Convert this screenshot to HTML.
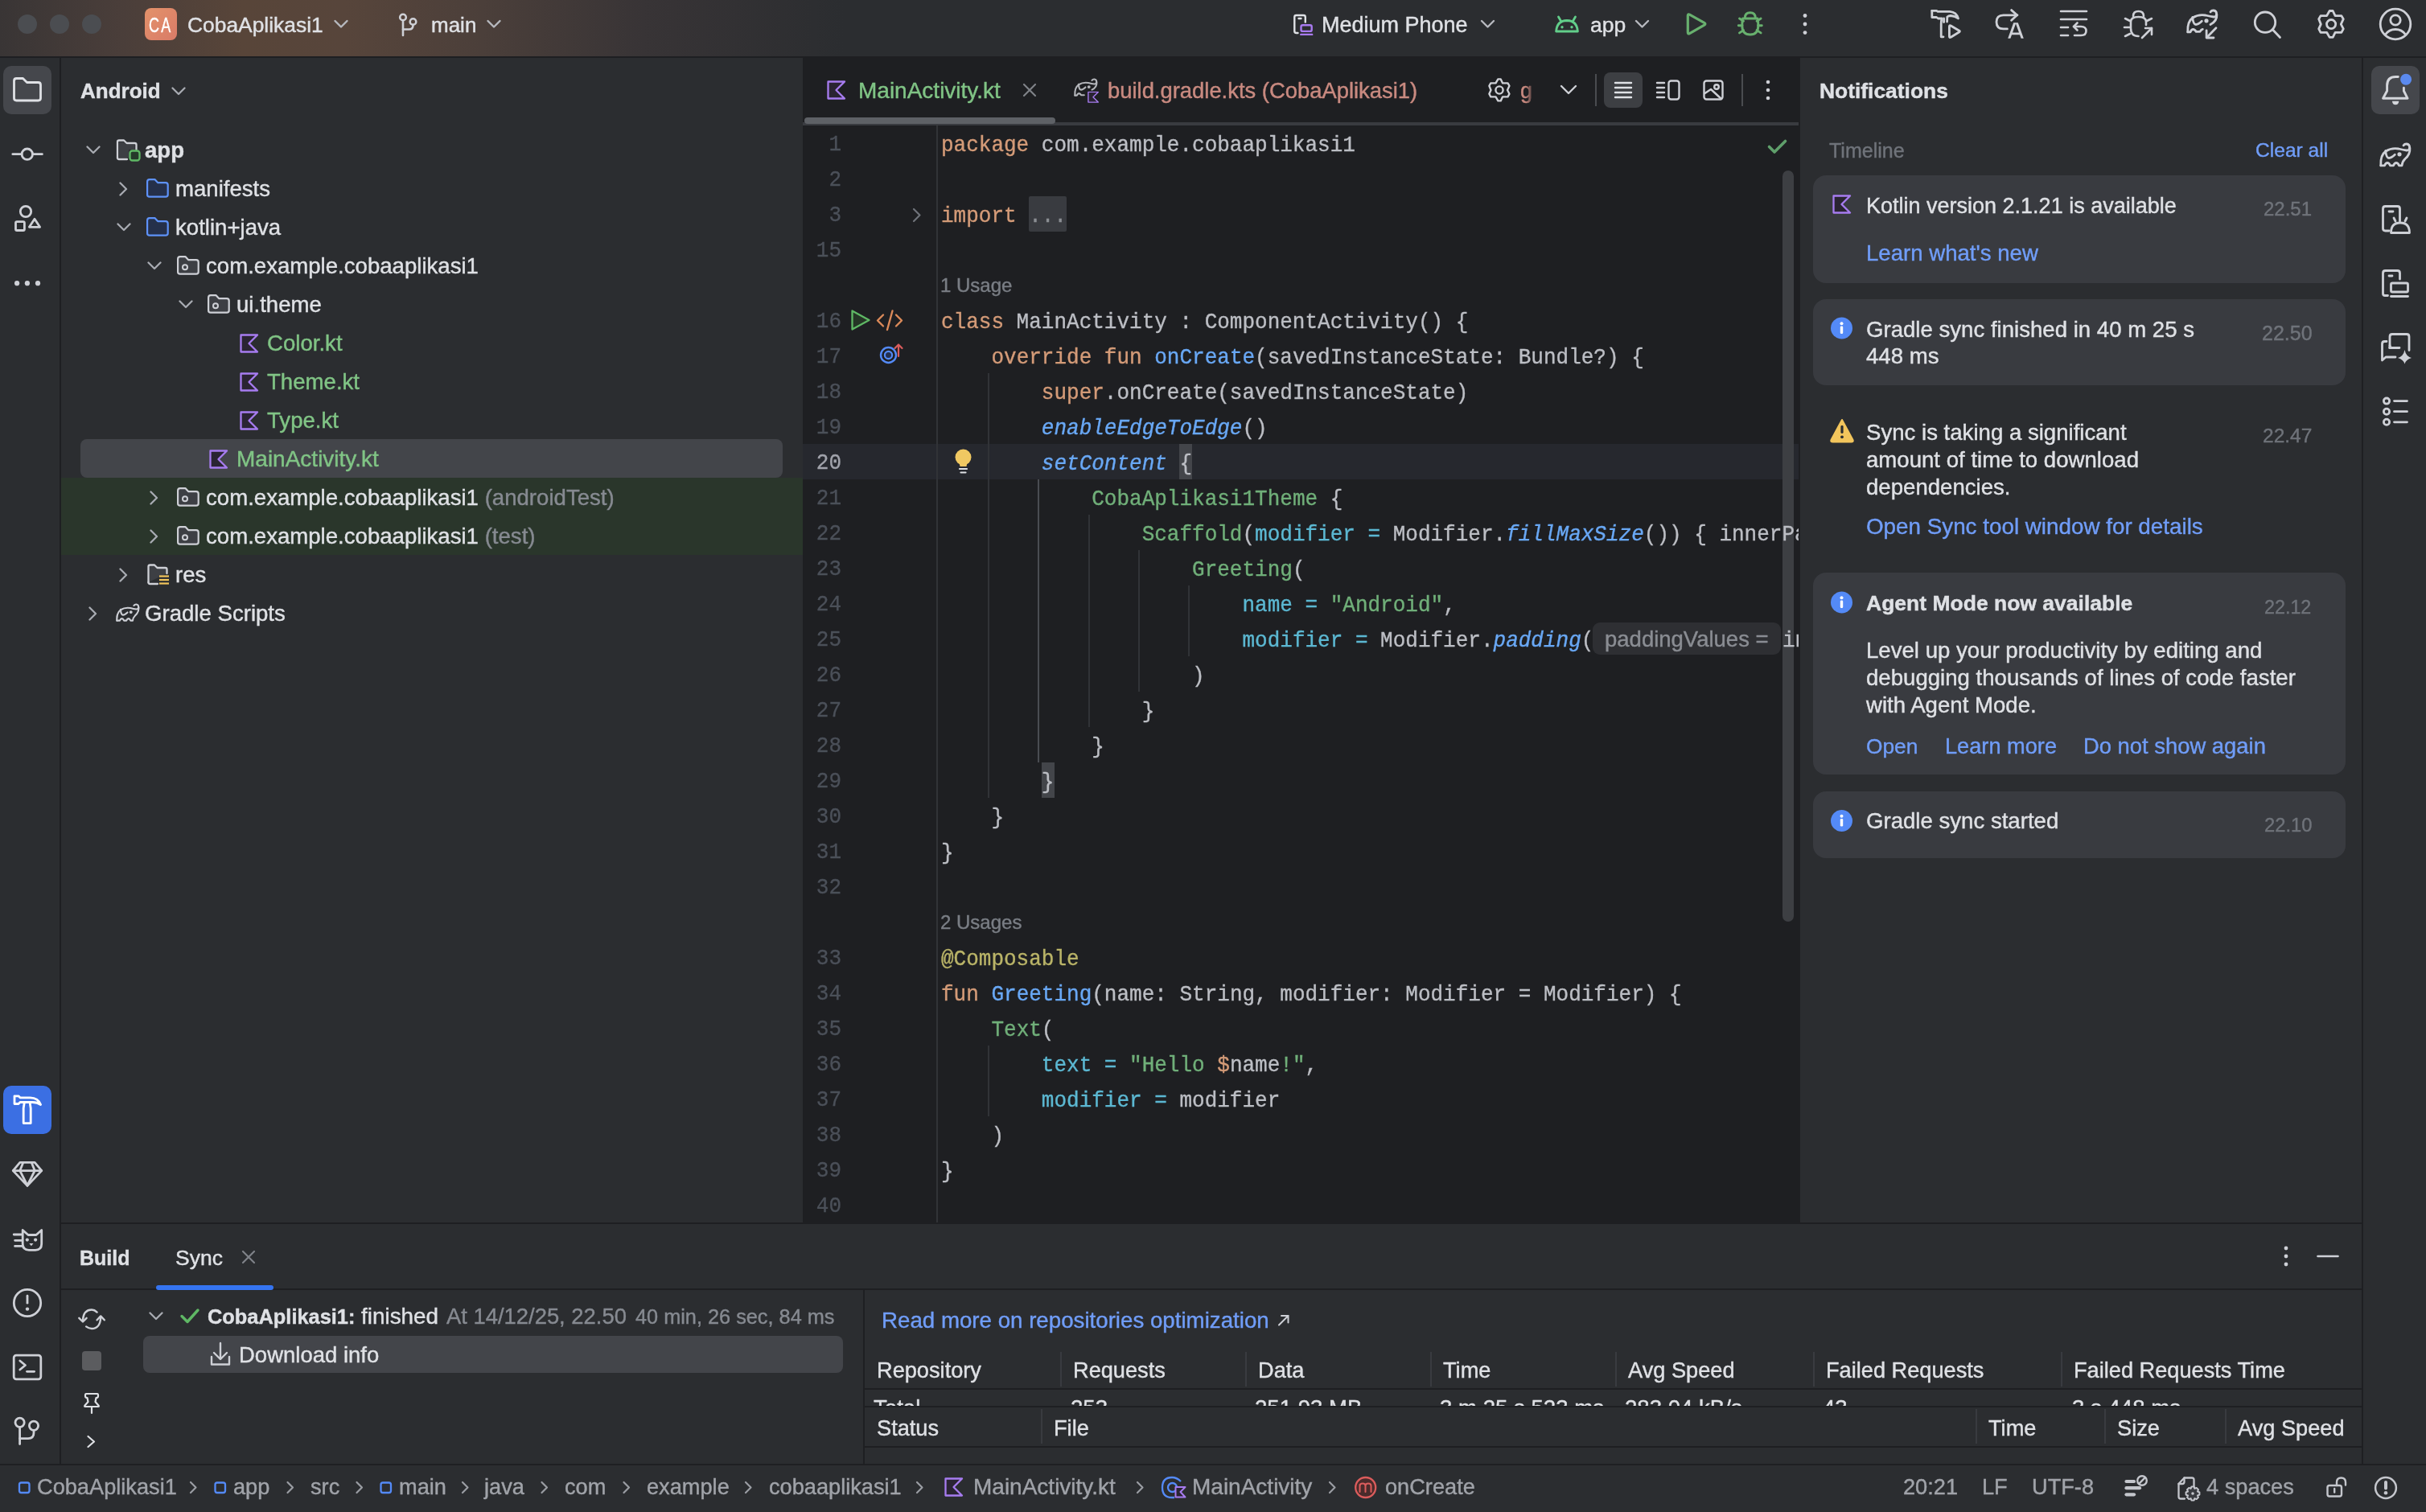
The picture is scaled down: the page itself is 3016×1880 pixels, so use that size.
<!DOCTYPE html>
<html><head><meta charset="utf-8">
<style>
*{margin:0;padding:0;box-sizing:border-box}
html,body{will-change:transform;width:3016px;height:1880px;overflow:hidden;background:#2B2D30;font-family:"Liberation Sans",sans-serif;color:#DFE1E5;font-size:27.6px}
.a{position:absolute}
.t{-webkit-text-stroke:0.4px currentColor;position:absolute;margin-top:1px;white-space:pre;line-height:44px;height:44px}
svg.i{position:absolute;overflow:visible}
.s{fill:none;stroke-linecap:round;stroke-linejoin:round}
.cd{transform:scaleY(1.07);transform-origin:0 29px;-webkit-text-stroke:0.35px currentColor;position:absolute;left:1170px;margin-top:1px;white-space:pre;font-family:"Liberation Mono",monospace;font-size:26px;line-height:44px;height:44px;color:#BCBEC4}
.ln{transform:scaleY(1.07);transform-origin:0 29px;-webkit-text-stroke:0.3px currentColor;position:absolute;left:996px;width:50px;text-align:right;white-space:pre;font-family:"Liberation Mono",monospace;font-size:26px;line-height:44px;height:44px;color:#4B5059}
.k{color:#D49B78}.fd{color:#69A8F5}.fi{color:#69A8F5;font-style:italic}.cp{color:#70AF79}.na{color:#5CB8D2}.st{color:#70AF79}.an{color:#BAB468}
.gl{position:absolute;width:2px;background:#313337}
.lnk{color:#709DF8}
.gr{color:#6F737A}
.card{position:absolute;left:2254px;width:662px;background:#393B40;border-radius:16px}
</style></head><body>

<!-- ============ TITLE BAR ============ -->
<div class="a" style="left:0;top:0;width:3016px;height:70px;background:#2B2D30"></div>
<div class="a" style="left:0;top:0;width:1100px;height:70px;background:linear-gradient(90deg,#393535 0px,#4A3E3A 150px,#584539 300px,#57453B 430px,#4B3F3A 600px,#383436 800px,#2B2D30 1050px)"></div>
<svg class="i" style="left:0;top:0" width="3016" height="70">
 <g fill="#4B4D51"><circle cx="34" cy="30" r="12"/><circle cx="74" cy="30" r="12"/><circle cx="114" cy="30" r="12"/></g>
 <defs><linearGradient id="pg" x1="0" y1="0" x2="1" y2="1"><stop offset="0" stop-color="#E3926A"/><stop offset="1" stop-color="#D97B68"/></linearGradient></defs>
 <rect x="180" y="10" width="40" height="40" rx="8" fill="url(#pg)"/>
 <g class="s" stroke="#B7B9BF" stroke-width="2.4"><path d="M416.5 26 L424 33.5 L431.5 26"/><path d="M606.5 26 L614 33.5 L621.5 26"/><path d="M1842 26 L1849.5 33.5 L1857 26"/><path d="M2034 26 L2041.5 33.5 L2049 26"/></g>
 <g class="s" stroke="#CED0D6" stroke-width="2.6"><circle cx="501" cy="21.5" r="3.8"/><circle cx="513.5" cy="27" r="3.8"/><path d="M501 25.3 V44"/><path d="M513.5 30.8 V31.5 Q513.5 36.5 508.5 36.5 H501"/></g>
 <!-- device icon -->
 <g class="s" stroke="#DFE1E5" stroke-width="2.4"><path d="M1613.5 41 H1611.5 Q1609.3 41 1609.3 38.8 V21.2 Q1609.3 19 1611.5 19 H1620.5 Q1622.8 19 1622.8 21.2 V27.5"/><path d="M1614.5 23 H1617.5"/></g>
 <g class="s" stroke="#A97BF0" stroke-width="2.4"><rect x="1617.5" y="31.3" width="13.2" height="7.6" rx="2"/><path d="M1617.3 42.9 H1631.2"/></g>
 <!-- android -->
 <g class="s" stroke="#62CE8A" stroke-width="2.8"><path d="M1934.6 39 Q1935.5 25.8 1948 25.5 Q1960.5 25.8 1961.4 39 Z"/><path d="M1937.5 21 L1941 27"/><path d="M1958.5 21 L1955 27"/></g>
 <g fill="#62CE8A"><circle cx="1942" cy="33.8" r="1.7"/><circle cx="1954" cy="33.8" r="1.7"/></g>
 <!-- run / debug -->
 <path class="s" stroke="#68B06E" stroke-width="3.2" d="M2098.3 19.5 Q2098.3 17 2100.5 18.2 L2118.8 28.4 Q2121 29.8 2118.8 31.2 L2100.5 41.6 Q2098.3 42.8 2098.3 40.3 Z"/>
 <g class="s" stroke="#68B06E" stroke-width="2.9"><path d="M2169.3 22.4 Q2169.3 15.8 2175.8 15.8 Q2182.3 15.8 2182.3 22.4"/><path d="M2166.6 23 H2185 Q2185.8 26 2185.8 32 Q2185.8 43 2175.8 43 Q2165.8 43 2165.8 32 Q2165.8 26 2166.6 23 Z"/><path d="M2162.5 23 L2167.5 26.3 M2189.1 23 L2184.1 26.3 M2161.3 31.7 H2166 M2185.6 31.7 H2190.3 M2162.5 40.9 L2167.5 37.6 M2189.1 40.9 L2184.1 37.6"/></g>
 <g fill="#CED0D6"><circle cx="2244" cy="19.5" r="2.4"/><circle cx="2244" cy="30" r="2.4"/><circle cx="2244" cy="40.6" r="2.4"/></g>
 <!-- build & run -->
 <g class="s" stroke="#CED0D6" stroke-width="2.8"><path d="M2401.8 13.3 H2407.5 L2409 14.3 H2424 Q2432.5 15 2434.5 23 Q2431 20 2425 19.5 Q2422.5 19.5 2420.8 21 L2420.6 27"/><path d="M2401.8 13.3 V21.5 H2407.5 L2409.5 23 H2414"/><path d="M2416.6 23 V27.5"/><path d="M2414 23.5 Q2413.2 26 2413.2 30 V45.8 H2416"/><path d="M2423.4 33 Q2423.4 31 2425.3 32 L2435.8 38.3 Q2437 39 2435.8 39.8 L2425.3 46.3 Q2423.4 47.3 2423.4 45.3 Z"/></g>
 <!-- translate -->
 <g class="s" stroke="#CED0D6" stroke-width="2.8"><path d="M2495.4 35.9 H2490.5 Q2482 35.9 2482 27.3 Q2482 18.8 2490.5 18.8 H2508"/><path d="M2500.6 12.6 L2507.6 18.8 L2500.6 25.2"/></g>
 <path d="M2503.2 28.2 H2508.8 L2515.8 47.8 H2512.6 L2511 43.2 H2501 L2499.4 47.8 H2496.2 Z M2502 40.4 H2510 L2506 29.6 Z" fill="#CED0D6" fill-rule="evenodd"/>
 <!-- lines undo -->
 <g class="s" stroke="#CED0D6" stroke-width="2.6"><path d="M2562 14 H2594"/><path d="M2562 24 H2594"/><path d="M2562 34 H2571"/><path d="M2562 44 H2571"/><path d="M2579 44 H2587 Q2593.5 44 2593.5 38.5 Q2593.5 33 2587 33 H2578"/><path d="M2582.5 28.5 L2578 33 L2582.5 37.5"/></g>
 <!-- bug arrow -->
 <g class="s" stroke="#CED0D6" stroke-width="2.6"><path d="M2652 20 Q2652 14 2658.5 14 Q2665 14 2665 20"/><path d="M2668 31 V27 Q2668 21 2658.5 21 Q2649 21 2649 27 V35 Q2649 45 2658.5 45"/><path d="M2641 34 H2648"/><path d="M2642 23 L2648 26"/><path d="M2675 23 L2669 26"/><path d="M2642 45 L2648 42"/><path d="M2663 47 L2675 35"/><path d="M2667 35 H2675 V43"/></g>
 <!-- elephant arrow -->
 <use href="#eleph" color="#CED0D6" transform="translate(2718 11)"/>
 <g class="s" stroke="#CED0D6" stroke-width="2.8"><path d="M2755.9 18 Q2756.5 26 2748 30.5"/><path d="M2719.8 39.8 H2723 Q2724.5 36.5 2726.5 36.5 Q2728.5 36.5 2730.3 39.4 H2735 Q2736.5 36.5 2738.3 36.3"/><path d="M2755 34.8 L2743.8 46.2"/><path d="M2743.1 37.8 V47 H2752"/></g>
 <!-- search gear avatar -->
 <g class="s" stroke="#CED0D6" stroke-width="2.8"><circle cx="2816" cy="27.7" r="12.7"/><path d="M2825.5 37 L2834.5 46.5"/>
 <path d="M2896.1 13.5 H2900.2 L2903.1 19.6 H2910.9 L2913.3 23.7 L2910.3 30.1 L2913.3 35.9 L2910.9 40.3 H2903.1 L2900.2 46.4 H2896.1 L2892.6 40.3 H2885 L2882.7 35.9 L2885.3 30.1 L2882.7 23.7 L2885 19.6 H2892.6 Z"/><circle cx="2898.1" cy="30.1" r="5.6"/>
 <circle cx="2978" cy="30" r="18.8"/><circle cx="2978" cy="25" r="6.2"/><path d="M2965.5 43 Q2970 36.5 2978 36.5 Q2986 36.5 2990.5 43"/></g>
</svg>
<div class="t" style="left:185px;top:8px;font-size:25px;color:#FFFFFF;letter-spacing:3px;transform:scaleX(0.72);transform-origin:0 50%">CA</div>
<div class="t" style="left:233px;top:8px;font-size:26.4px">CobaAplikasi1</div>
<div class="t" style="left:536px;top:8px;font-size:26px">main</div>
<div class="t" style="left:1643px;top:8px;font-size:27px">Medium Phone</div>
<div class="t" style="left:1977px;top:8px;font-size:26.5px">app</div>

<!-- top border -->
<div class="a" style="left:0;top:70px;width:3016px;height:2px;background:#1E1F22"></div>

<!-- ============ LEFT STRIP ============ -->
<div class="a" style="left:74px;top:72px;width:2px;height:1748px;background:#1E1F22"></div>
<svg width="0" height="0" style="position:absolute">
 <defs>
  <symbol id="kt" viewBox="0 0 24 24"><path d="M1.5 1.5 H22 L11.5 12 L22 22.5 H1.5 Z" fill="#2A2433" stroke="#A77CF0" stroke-width="2.3" stroke-linejoin="round"/></symbol>
  <symbol id="pkg" viewBox="0 0 28 24"><path d="M1.1 19.9 V3.9 Q1.1 1.1 3.9 1.1 H10.4 L14.1 5.1 H23.9 Q26.7 5.1 26.7 7.9 V19.9 Q26.7 22.6 23.9 22.6 H3.9 Q1.1 22.6 1.1 19.9 Z" fill="#3D3F44" stroke="#CED0D6" stroke-width="2.2" stroke-linejoin="round"/><circle cx="10" cy="14.2" r="3" fill="none" stroke="#CED0D6" stroke-width="2"/></symbol>
  <symbol id="bfold" viewBox="0 0 28 24"><path d="M1.1 19.9 V3.9 Q1.1 1.1 3.9 1.1 H10.4 L14.1 5.1 H23.9 Q26.7 5.1 26.7 7.9 V19.9 Q26.7 22.6 23.9 22.6 H3.9 Q1.1 22.6 1.1 19.9 Z" fill="#25304A" stroke="#5E92F8" stroke-width="2.2" stroke-linejoin="round"/></symbol>
  <symbol id="chd" viewBox="0 0 18 11"><path d="M1.5 1.5 L9 9 L16.5 1.5" fill="none" stroke="#A8ABB2" stroke-width="2.3" stroke-linecap="round" stroke-linejoin="round"/></symbol>
  <symbol id="chr" viewBox="0 0 11 18"><path d="M1.5 1.5 L9 9 L1.5 16.5" fill="none" stroke="#A8ABB2" stroke-width="2.3" stroke-linecap="round" stroke-linejoin="round"/></symbol>
  <symbol id="info" viewBox="0 0 28 28"><circle cx="14" cy="14" r="13.5" fill="#548AF7"/><circle cx="14" cy="8.3" r="2" fill="#fff"/><rect x="12.3" y="11.5" width="3.4" height="9.5" rx="1.3" fill="#fff"/></symbol>
  <g id="eleph" fill="none" stroke="currentColor" stroke-width="2.8" stroke-linecap="round" stroke-linejoin="round"><path d="M1.8 28.8 Q1 16 8 11 Q15 6.5 24 8 Q30 9.5 34 10 Q37.5 10.2 37.6 6 Q37.5 2.5 34 2 Q31.5 1.8 30 3.8"/><path d="M7.8 10.5 Q8.5 19.5 12 19.5 Q15 19.5 19.3 15.3"/><circle cx="25" cy="14.8" r="1.2" fill="currentColor"/></g>
  <g id="elephFull" fill="none" stroke="currentColor" stroke-width="2.8" stroke-linecap="round" stroke-linejoin="round"><use href="#eleph"/><path d="M37.9 7 Q38.5 15 32 20.5 Q28.5 24 28 28.8 H24.5 Q23 25.5 21 25.5 Q19 25.5 17.5 28.8 H13.5 Q12 25.5 10 25.5 Q8 25.5 6.5 28.8 H1.8"/></g>
 </defs>
</svg>
<svg class="i" style="left:0;top:0" width="74" height="1820">
 <rect x="4" y="82" width="60" height="60" rx="10" fill="#45474C"/>
 <path class="s" stroke="#DFE1E5" stroke-width="2.8" d="M17.5 122 V100.5 Q17.5 97.5 20.5 97.5 H28.5 L33.5 102.5 H47.5 Q50.5 102.5 50.5 105.5 V122 Q50.5 125 47.5 125 H20.5 Q17.5 125 17.5 122 Z"/>
 <g class="s" stroke="#CED0D6" stroke-width="2.8"><circle cx="33.8" cy="191.7" r="6.7"/><path d="M15.8 191.7 H27 M40.6 191.7 H52.4"/>
  <circle cx="32" cy="263" r="6.7"/><rect x="19.5" y="275.6" width="10.9" height="10.9" rx="1.5"/><path d="M43 272.3 L49.6 282.3 H36.4 Z"/></g>
 <g fill="#CED0D6"><circle cx="21.1" cy="352.2" r="3.1"/><circle cx="33.9" cy="352.2" r="3.1"/><circle cx="47" cy="352.2" r="3.1"/></g>
 <rect x="4" y="1350" width="60" height="60" rx="10" fill="#3B6FE3"/>
 <g class="s" stroke="#FFFFFF" stroke-width="2.8"><path d="M18 1362.8 H23 L25 1364.8 H37.5 Q47.5 1365 50.6 1373.5 Q46.5 1370.5 40.5 1370.5 H25 L23 1372.5 H18 Z"/><path d="M30.2 1371.5 L29.2 1378 V1396.6 H38.2 V1378 L37.2 1371.5"/></g>
 <g class="s" stroke="#CED0D6" stroke-width="2.8"><path d="M24.8 1445.3 H43.2 L51.8 1455.6 L34 1474.4 L16.2 1455.6 Z"/><path d="M16.5 1455.6 H51.5"/><path d="M28.8 1445.5 L24.8 1455.6 L34 1474 L43.2 1455.6 L39.2 1445.5"/></g>
 <g class="s" stroke="#CED0D6" stroke-width="2.8"><path d="M28.2 1529.5 L35 1535.5 H45 L51.7 1529.5 V1546.5 Q51.7 1554.3 44 1554.3 H36 Q28.2 1554.3 28.2 1546.5 Z"/><path d="M17.2 1535 H27.5 M18.6 1542.3 H27.5 M18.6 1549.4 H27.5"/></g>
 <g fill="#CED0D6"><circle cx="33.8" cy="1541.6" r="2.1"/><circle cx="44.1" cy="1541.6" r="2.1"/><path d="M36.3 1546 H41.5 L38.9 1549.3 Z"/></g>
 <g class="s" stroke="#CED0D6" stroke-width="2.8"><circle cx="34" cy="1620" r="16.7"/><path d="M34 1611.2 V1620.2"/></g>
 <circle cx="34" cy="1627.6" r="2.2" fill="#CED0D6"/>
 <g class="s" stroke="#CED0D6" stroke-width="2.8"><rect x="17.2" y="1685.2" width="33.6" height="29.6" rx="3"/><path d="M24.8 1692 L31.5 1697.5 L24.8 1703"/><path d="M33.5 1705.3 H42.6"/></g>
 <g class="s" stroke="#CED0D6" stroke-width="2.8"><circle cx="24.6" cy="1768.8" r="5.6"/><circle cx="42" cy="1772.8" r="5.6"/><path d="M24.6 1774.4 V1795.6"/><path d="M42 1778.4 V1781.5 Q42 1788.6 35 1788.6 H24.6"/></g>
</svg>

<!-- ============ PROJECT PANEL ============ -->
<div class="a" style="left:76px;top:594px;width:922px;height:96px;background:#2A362B"></div>
<div class="a" style="left:100px;top:546px;width:873px;height:48px;background:#43454A;border-radius:8px"></div>
<div class="t" style="left:100px;top:90px;font-size:26px;font-weight:bold">Android</div>
<svg class="i" style="left:0;top:0" width="998" height="800">
 <use href="#chd" x="213" y="108" width="18" height="11"/>
 <use href="#chd" x="107" y="181" width="18" height="11"/>
 <use href="#chr" x="148" y="226" width="11" height="18"/>
 <use href="#chd" x="145" y="277" width="18" height="11"/>
 <use href="#chd" x="183" y="325" width="18" height="11"/>
 <use href="#chd" x="222" y="373" width="18" height="11"/>
 <use href="#chr" x="186" y="610" width="11" height="18"/>
 <use href="#chr" x="186" y="658" width="11" height="18"/>
 <use href="#chr" x="148" y="706" width="11" height="18"/>
 <use href="#chr" x="110" y="754" width="11" height="18"/>
 <!-- app module icon -->
 <path d="M146 196 V176.5 Q146 174.5 148 174.5 H154 L157.5 178 H167.5 Q169.5 178 169.5 180 V186" fill="none" stroke="#CED0D6" stroke-width="2.3" stroke-linejoin="round" stroke-linecap="round"/>
 <path d="M146 196 Q146 198 148 198 H158" fill="none" stroke="#CED0D6" stroke-width="2.3" stroke-linecap="round"/>
 <path d="M148 176.5 H154 L157.5 180 H167.5 V186 H160 V196 H148 Z" fill="#3D3F44"/>
 <rect x="161.5" y="187.5" width="12" height="12" rx="3" fill="#253A2A" stroke="#5FB865" stroke-width="2.3"/>
 <use href="#bfold" x="182" y="222" width="28" height="24"/>
 <use href="#bfold" x="182" y="270" width="28" height="24"/>
 <use href="#pkg" x="220" y="318" width="28" height="24"/>
 <use href="#pkg" x="258" y="366" width="28" height="24"/>
 <use href="#kt" x="298" y="415" width="24" height="24"/>
 <use href="#kt" x="298" y="463" width="24" height="24"/>
 <use href="#kt" x="298" y="511" width="24" height="24"/>
 <use href="#kt" x="260" y="559" width="24" height="24"/>
 <use href="#pkg" x="220" y="606" width="28" height="24"/>
 <use href="#pkg" x="220" y="654" width="28" height="24"/>
 <!-- res icon -->
 <path d="M184.5 724 V704.5 Q184.5 702.5 186.5 702.5 H192 L195.5 706 H205.5 Q207.5 706 207.5 708 V713" fill="#3D3F44" stroke="#CED0D6" stroke-width="2.3" stroke-linejoin="round" stroke-linecap="round"/>
 <path d="M184.5 724 Q184.5 726 186.5 726 H196" fill="none" stroke="#CED0D6" stroke-width="2.3" stroke-linecap="round"/>
 <g stroke="#F2C55C" stroke-width="2.2"><path d="M198 716.5 H210"/><path d="M198 721 H210"/><path d="M198 725.5 H210"/></g>
 <!-- gradle icon -->
 <use href="#elephFull" color="#CED0D6" transform="translate(144 750) scale(0.75)"/>
</svg>
<div class="t" style="left:180px;top:164px;font-weight:bold">app</div>
<div class="t" style="left:218px;top:212px">manifests</div>
<div class="t" style="left:218px;top:260px">kotlin+java</div>
<div class="t" style="left:256px;top:308px">com.example.cobaaplikasi1</div>
<div class="t" style="left:294px;top:356px">ui.theme</div>
<div class="t" style="left:332px;top:404px;color:#80C485">Color.kt</div>
<div class="t" style="left:332px;top:452px;color:#80C485">Theme.kt</div>
<div class="t" style="left:332px;top:500px;color:#80C485">Type.kt</div>
<div class="t" style="left:294px;top:548px;color:#80C485;font-size:28px">MainActivity.kt</div>
<div class="t" style="left:256px;top:596px">com.example.cobaaplikasi1 <span class="gr" style="color:#868A91">(androidTest)</span></div>
<div class="t" style="left:256px;top:644px">com.example.cobaaplikasi1 <span style="color:#868A91">(test)</span></div>
<div class="t" style="left:218px;top:692px">res</div>
<div class="t" style="left:180px;top:740px">Gradle Scripts</div>

<!-- ============ EDITOR ============ -->
<div class="a" style="left:998px;top:72px;width:1240px;height:1448px;background:#1E1F22"></div>
<div class="a" style="left:0;top:0;width:2236px;height:1520px;overflow:hidden">
 <!-- tab bar -->
 <div class="a" style="left:998px;top:152px;width:1238px;height:4px;background:#393B40"></div>
 <div class="a" style="left:1000px;top:146px;width:312px;height:8px;background:#5E6166;border-radius:4px"></div>
 <div class="t" style="left:1067px;top:90px;font-size:28px;color:#80C485">MainActivity.kt</div>
 <div class="t" style="left:1377px;top:90px;font-size:27.4px;color:#C98A80">build.gradle.kts (CobaAplikasi1)</div>
 <div class="t" style="left:1890px;top:90px;font-size:27px;color:#C98A80;width:18px;overflow:hidden;-webkit-mask-image:linear-gradient(90deg,#000 40%,transparent)">g</div>
 <div class="a" style="left:1994px;top:90px;width:48px;height:44px;background:#3D3F43;border-radius:8px"></div>
 <!-- current line -->
 <div class="a" style="left:998px;top:552px;width:1238px;height:44px;background:#26282E"></div>
 <!-- fold box & brace highlights -->
 <div class="a" style="left:1279px;top:244px;width:47px;height:44px;background:#393B40;border-radius:2px"></div>
 <div class="a" style="left:1466px;top:552px;width:16px;height:44px;background:#43454A"></div>
 <div class="a" style="left:1295px;top:948px;width:16px;height:44px;background:#43454A"></div>
 <!-- gutter line and indent guides -->
 <div class="gl" style="left:1164px;top:156px;height:1364px"></div>
 <div class="gl" style="left:1228px;top:464px;height:528px"></div>
 <div class="gl" style="left:1290px;top:596px;height:352px;background:#4A4C52"></div>
 <div class="gl" style="left:1353px;top:640px;height:264px"></div>
 <div class="gl" style="left:1415px;top:684px;height:176px"></div>
 <div class="gl" style="left:1477px;top:728px;height:88px"></div>
 <div class="gl" style="left:1228px;top:1300px;height:88px"></div>
 <div class="a" style="left:2216px;top:212px;width:14px;height:934px;border-radius:7px;background:#3D3F43"></div>
 <!-- line numbers -->
 <div class="ln" style="top:158px">1</div>
 <div class="ln" style="top:202px">2</div>
 <div class="ln" style="top:246px">3</div>
 <div class="ln" style="top:290px">15</div>
 <div class="ln" style="top:378px">16</div>
 <div class="ln" style="top:422px">17</div>
 <div class="ln" style="top:466px">18</div>
 <div class="ln" style="top:510px">19</div>
 <div class="ln" style="top:554px;color:#A1A3AB">20</div>
 <div class="ln" style="top:598px">21</div>
 <div class="ln" style="top:642px">22</div>
 <div class="ln" style="top:686px">23</div>
 <div class="ln" style="top:730px">24</div>
 <div class="ln" style="top:774px">25</div>
 <div class="ln" style="top:818px">26</div>
 <div class="ln" style="top:862px">27</div>
 <div class="ln" style="top:906px">28</div>
 <div class="ln" style="top:950px">29</div>
 <div class="ln" style="top:994px">30</div>
 <div class="ln" style="top:1038px">31</div>
 <div class="ln" style="top:1082px">32</div>
 <div class="ln" style="top:1170px">33</div>
 <div class="ln" style="top:1214px">34</div>
 <div class="ln" style="top:1258px">35</div>
 <div class="ln" style="top:1302px">36</div>
 <div class="ln" style="top:1346px">37</div>
 <div class="ln" style="top:1390px">38</div>
 <div class="ln" style="top:1434px">39</div>
 <div class="ln" style="top:1478px">40</div>
 <!-- code -->
 <div class="cd" style="top:158px"><span class="k">package</span> com.example.cobaaplikasi1</div>
 <div class="cd" style="top:246px"><span class="k">import</span> <span style="color:#8C8F94">...</span></div>
 <div class="t" style="left:1169px;top:332px;font-size:24px;color:#7A7E85">1 Usage</div>
 <div class="cd" style="top:378px"><span class="k">class</span> MainActivity : ComponentActivity() {</div>
 <div class="cd" style="top:422px">    <span class="k">override fun</span> <span class="fd">onCreate</span>(savedInstanceState: Bundle?) {</div>
 <div class="cd" style="top:466px">        <span class="k">super</span>.onCreate(savedInstanceState)</div>
 <div class="cd" style="top:510px">        <span class="fi">enableEdgeToEdge</span>()</div>
 <div class="cd" style="top:554px">        <span class="fi">setContent</span> {</div>
 <div class="cd" style="top:598px">            <span class="cp">CobaAplikasi1Theme</span> {</div>
 <div class="cd" style="top:642px">                <span class="cp">Scaffold</span>(<span class="na">modifier =</span> Modifier.<span class="fi">fillMaxSize</span>()) { innerPadding -&gt;</div>
 <div class="cd" style="top:686px">                    <span class="cp">Greeting</span>(</div>
 <div class="cd" style="top:730px">                        <span class="na">name =</span> <span class="st">"Android"</span>,</div>
 <div class="cd" style="top:774px">                        <span class="na">modifier =</span> Modifier.<span class="fi">padding</span>(</div>
 <div class="a" style="left:1980px;top:774px;width:234px;height:40px;background:#2E2F33;border-radius:9px"></div>
 <div class="t" style="left:1995px;top:772px;font-size:27.5px;color:#8A8D93">paddingValues =</div>
 <div class="cd" style="left:2216px;top:774px">innerPadding)</div>
 <div class="cd" style="top:818px">                    )</div>
 <div class="cd" style="top:862px">                }</div>
 <div class="cd" style="top:906px">            }</div>
 <div class="cd" style="top:950px">        }</div>
 <div class="cd" style="top:994px">    }</div>
 <div class="cd" style="top:1038px">}</div>
 <div class="t" style="left:1169px;top:1124px;font-size:24px;color:#7A7E85">2 Usages</div>
 <div class="cd" style="top:1170px"><span class="an">@Composable</span></div>
 <div class="cd" style="top:1214px"><span class="k">fun</span> <span class="fd">Greeting</span>(name: String, modifier: Modifier = Modifier) {</div>
 <div class="cd" style="top:1258px">    <span class="cp">Text</span>(</div>
 <div class="cd" style="top:1302px">        <span class="na">text =</span> <span class="st">"Hello </span><span class="k">$</span>name<span class="st">!"</span>,</div>
 <div class="cd" style="top:1346px">        <span class="na">modifier =</span> modifier</div>
 <div class="cd" style="top:1390px">    )</div>
 <div class="cd" style="top:1434px">}</div>
 <!-- gutter icons -->
 <svg class="i" style="left:0;top:0" width="2236" height="1520">
  <path d="M1136 260 L1143.5 267.5 L1136 275" fill="none" stroke="#6F737A" stroke-width="2.2" stroke-linecap="round" stroke-linejoin="round"/>
  <path d="M1059.5 386.5 L1080.5 398 L1059.5 409.5 Z" fill="#253526" stroke="#5FB865" stroke-width="2.3" stroke-linejoin="round"/>
  <g fill="none" stroke="#DB8A5A" stroke-width="2.4" stroke-linecap="round" stroke-linejoin="round"><path d="M1098 391.5 L1091 398.5 L1098 405.5"/><path d="M1114 391.5 L1121 398.5 L1114 405.5"/><path d="M1109.5 386.5 L1103 410"/></g>
  <circle cx="1104.5" cy="441.5" r="9.5" fill="none" stroke="#548AF7" stroke-width="2.4"/><circle cx="1104.5" cy="441.5" r="4.6" fill="#243050" stroke="#548AF7" stroke-width="2.2"/>
  <g fill="none" stroke="#DB5C5C" stroke-width="2.2" stroke-linecap="round" stroke-linejoin="round"><path d="M1117 443 V429"/><path d="M1112.5 433 L1117 428.5 L1121.5 433"/></g>
  <!-- bulb -->
  <circle cx="1197.5" cy="568.5" r="10" fill="#F0C862"/><path d="M1192 573 H1203 L1201.5 580 H1193.5 Z" fill="#F0C862"/>
  <path d="M1193 583 H1202" stroke="#DFE1E5" stroke-width="2.2" stroke-linecap="round"/><path d="M1194.5 587.5 H1200.5" stroke="#DFE1E5" stroke-width="2.2" stroke-linecap="round"/>
  <!-- check -->
  <path d="M2199.5 182.5 L2206 189 L2219.5 175.5" fill="none" stroke="#5F9F6B" stroke-width="3.6" stroke-linecap="round" stroke-linejoin="round"/>
  <!-- tab icons -->
  <use href="#kt" x="1028" y="100" width="24" height="24"/>
  <path d="M1273 105 L1287 119 M1287 105 L1273 119" stroke="#7F8288" stroke-width="2.2" stroke-linecap="round"/>
  <use href="#eleph" color="#B4B6BB" transform="translate(1335 97) scale(0.75)"/><path d="M1363.4 102.3 Q1363.9 108.3 1357.5 111.6" fill="none" stroke="#B4B6BB" stroke-width="2.1" stroke-linecap="round"/><path d="M1336.4 118.6 H1338.8 Q1339.9 116.1 1341.4 116.1 Q1342.9 116.1 1344.2 118.3 H1347.8" fill="none" stroke="#B4B6BB" stroke-width="2.1" stroke-linecap="round" stroke-linejoin="round"/>
  <use href="#kt" x="1352" y="113.5" width="14.5" height="14.5"/>
  <g fill="none" stroke="#CED0D6" stroke-width="2.4" stroke-linecap="round" stroke-linejoin="round">
   <g transform="translate(1864 112) scale(0.82) translate(-2898.1 -30.1)" stroke-width="2.9"><path d="M2896.1 13.5 H2900.2 L2903.1 19.6 H2910.9 L2913.3 23.7 L2910.3 30.1 L2913.3 35.9 L2910.9 40.3 H2903.1 L2900.2 46.4 H2896.1 L2892.6 40.3 H2885 L2882.7 35.9 L2885.3 30.1 L2882.7 23.7 L2885 19.6 H2892.6 Z"/><circle cx="2898.1" cy="30.1" r="5.6"/></g>
   <path d="M1941 107 L1950 116 L1959 107"/>
   <path d="M2008 103 H2028 M2008 109 H2028 M2008 115 H2028 M2008 121 H2028" stroke="#DFE1E5"/>
   <path d="M2060 103 H2069 M2060 109 H2069 M2060 115 H2069 M2060 121 H2069"/><rect x="2074.5" y="100.5" width="13" height="23" rx="3"/>
   <rect x="2118.5" y="100.5" width="23" height="23" rx="3"/><circle cx="2134" cy="108" r="2.8"/><path d="M2119.5 116 L2127 111 L2140 123"/>
  </g>
  <path d="M1984 92 V132 M2166 92 V132" stroke="#4A4C50" stroke-width="2"/>
  <g fill="#CED0D6"><circle cx="2198" cy="102" r="2.3"/><circle cx="2198" cy="112" r="2.3"/><circle cx="2198" cy="122" r="2.3"/></g>
 </svg>
</div>

<!-- ============ NOTIFICATIONS ============ -->
<div class="a" style="left:2236px;top:72px;width:2px;height:1450px;background:#1E1F22"></div>
<div class="t" style="left:2262px;top:90px;font-size:26.4px;font-weight:bold">Notifications</div>
<div class="t" style="left:2274px;top:164px;font-size:25px;color:#6F737A">Timeline</div>
<div class="t" style="left:2804px;top:164px;font-size:24.6px;color:#709DF8">Clear all</div>
<div class="card" style="top:218px;height:134px"></div>
<div class="card" style="top:372px;height:107px"></div>
<div class="card" style="top:712px;height:251px"></div>
<div class="card" style="top:984px;height:83px"></div>
<svg class="i" style="left:0;top:0" width="2936" height="1100">
 <use href="#kt" x="2278" y="242" width="24" height="24"/>
 <use href="#info" x="2275.5" y="394" width="28" height="28"/>
 <use href="#info" x="2275.5" y="735" width="28" height="28"/>
 <use href="#info" x="2275.5" y="1006.5" width="28" height="28"/>
 <path d="M2290 522 L2303.5 547 Q2304.5 549.5 2301.5 549.5 H2278.5 Q2275.5 549.5 2276.5 547 Z" fill="#F2C55C" stroke="#F2C55C" stroke-width="2" stroke-linejoin="round"/>
 <rect x="2288.4" y="529" width="3.2" height="10" rx="1.4" fill="#2B2D30"/><circle cx="2290" cy="543.3" r="1.9" fill="#2B2D30"/>
</svg>
<div class="t" style="left:2320px;top:233px;font-size:27px">Kotlin version 2.1.21 is available</div>
<div class="t" style="left:2814px;top:237px;font-size:24px;color:#6F737A">22.51</div>
<div class="t" style="left:2320px;top:292px;font-size:27.6px;color:#709DF8">Learn what's new</div>
<div class="t" style="left:2320px;top:387px">Gradle sync finished in 40 m 25 s</div>
<div class="t" style="left:2320px;top:420px">448 ms</div>
<div class="t" style="left:2812px;top:391px;font-size:25px;color:#6F737A">22.50</div>
<div class="t" style="left:2320px;top:515px">Sync is taking a significant</div>
<div class="t" style="left:2320px;top:549px">amount of time to download</div>
<div class="t" style="left:2320px;top:583px">dependencies.</div>
<div class="t" style="left:2813px;top:519px;font-size:24.5px;color:#6F737A">22.47</div>
<div class="t" style="left:2320px;top:632px;font-size:27.8px;color:#709DF8">Open Sync tool window for details</div>
<div class="t" style="left:2320px;top:727px;font-size:26.5px;font-weight:bold">Agent Mode now available</div>
<div class="t" style="left:2815px;top:732px;font-size:23.3px;color:#6F737A">22.12</div>
<div class="t" style="left:2320px;top:786px">Level up your productivity by editing and</div>
<div class="t" style="left:2320px;top:820px">debugging thousands of lines of code faster</div>
<div class="t" style="left:2320px;top:854px">with Agent Mode.</div>
<div class="t" style="left:2320px;top:905px;font-size:26.3px;color:#709DF8">Open</div>
<div class="t" style="left:2418px;top:905px;font-size:27.2px;color:#709DF8">Learn more</div>
<div class="t" style="left:2590px;top:905px;font-size:27.4px;color:#709DF8">Do not show again</div>
<div class="t" style="left:2320px;top:998px">Gradle sync started</div>
<div class="t" style="left:2815px;top:1003px;font-size:23.8px;color:#6F737A">22.10</div>

<!-- ============ RIGHT STRIP ============ -->
<div class="a" style="left:2936px;top:72px;width:2px;height:1748px;background:#1E1F22"></div>
<svg class="i" style="left:2938px;top:0" width="78" height="1820">
 <g transform="translate(-2938 0)">
 <rect x="2948" y="82" width="60" height="60" rx="10" fill="#45474C"/>
 <g class="s" stroke="#D4D6DB" stroke-width="2.9"><path d="M2981.3 95.5 H2978.3 Q2967.6 95.5 2967.6 106.5 V113 L2962.6 122.3 H2993.1 L2988.4 113 V109.2"/></g>
 <path d="M2973.9 125.8 H2982.3 Q2981.8 130.3 2978.1 130.3 Q2974.4 130.3 2973.9 125.8 Z" fill="#D4D6DB"/>
 <circle cx="2991.1" cy="98.8" r="7" fill="#5B8AEF"/>
 <use href="#elephFull" color="#CED0D6" transform="translate(2958 177)"/>
 <g class="s" stroke="#CED0D6" stroke-width="2.8"><path d="M2970 287 H2965.5 Q2962.5 287 2962.5 284 V259.5 Q2962.5 256.5 2965.5 256.5 H2980.5 Q2983.5 256.5 2983.5 259.5 V275"/><path d="M2970 263 H2975"/><path d="M2972.5 289.5 Q2972.5 277 2984 277 Q2995.5 277 2995.5 289.5 Z"/><path d="M2976 271 L2978 275 M2992 271 L2990 275"/></g>
 <g class="s" stroke="#CED0D6" stroke-width="2.8"><path d="M2968.5 367.5 H2965 Q2962.5 367.5 2962.5 365 V339.5 Q2962.5 336.5 2965.5 336.5 H2980.5 Q2983.5 336.5 2983.5 339.5 V347"/><path d="M2970 343 H2974"/><rect x="2972.5" y="352" width="21" height="11" rx="1.8"/><path d="M2972.5 368.5 H2993.5"/></g>
 <g class="s" stroke="#CED0D6" stroke-width="2.8"><path d="M2967 424.5 H2964.5 Q2961.5 424.5 2961.5 427.5 V448 L2966 444 H2978"/><path d="M2974 432.5 H2970.5 Q2971 432.5 2971 429 V418.5 Q2971 415.5 2974 415.5 H2992 Q2995 415.5 2995 418.5 V435.5"/><path d="M2971 429.5 Q2971 432.5 2974 432.5 H2983"/></g>
 <path d="M2989.5 435 Q2991 443 2998 445 Q2991 447 2989.5 452.5 Q2988 447 2981 445 Q2988 443 2989.5 435 Z" fill="#CED0D6"/>
 <g class="s" stroke="#CED0D6" stroke-width="2.8"><circle cx="2967" cy="498.6" r="3.6"/><circle cx="2967" cy="511.7" r="3.6"/><circle cx="2967" cy="524.8" r="3.6"/><path d="M2976.5 498.6 H2992.5 M2976.5 511.7 H2992.5 M2976.5 524.8 H2992.5"/></g>
 </g>
</svg>

<!-- ============ BOTTOM PANEL ============ -->
<div class="a" style="left:76px;top:1520px;width:2860px;height:2px;background:#1E1F22"></div>
<div class="a" style="left:76px;top:1602px;width:2860px;height:2px;background:#1E1F22"></div>
<div class="a" style="left:194px;top:1598px;width:146px;height:6px;background:#3574F0;border-radius:3px"></div>
<div class="t" style="left:99px;top:1541px;font-size:25px;font-weight:bold">Build</div>
<div class="t" style="left:218px;top:1541px;font-size:26.5px">Sync</div>
<div class="a" style="left:1073px;top:1604px;width:2px;height:216px;background:#1E1F22"></div>
<div class="a" style="left:178px;top:1661px;width:870px;height:46px;background:#43454A;border-radius:8px"></div>
<svg class="i" style="left:0;top:0" width="2936" height="1820">
 <path d="M302 1556 L316 1570 M316 1556 L302 1570" stroke="#7F8288" stroke-width="2.2" stroke-linecap="round"/>
 <g fill="#CED0D6"><circle cx="2842" cy="1552" r="2.4"/><circle cx="2842" cy="1562" r="2.4"/><circle cx="2842" cy="1572" r="2.4"/></g>
 <path d="M2881.5 1562 H2906.5" stroke="#CED0D6" stroke-width="2.6" stroke-linecap="round"/>
 <!-- left toolbar -->
 <g class="s" stroke="#CED0D6" stroke-width="2.4"><path d="M120.6 1631.6 Q117.5 1628.5 114 1628.5 Q104 1628.5 103 1641"/><path d="M98.3 1638.8 L103 1643.5 L107.6 1638.8"/><path d="M107.1 1649.4 Q110.5 1652 114 1652 Q124.5 1652 125.2 1638"/><path d="M120.6 1641.3 L125.2 1636.4 L129.8 1641.3"/></g>
 <rect x="102" y="1680" width="24" height="24" rx="4" fill="#5B5C5F"/>
 <g class="s" stroke="#DFE1E5" stroke-width="2.2"><path d="M107 1733 H121 Q122 1733 122 1735 V1736 Q122 1738 119.5 1738 L118.5 1743 L122.5 1747.5 Q123.5 1749 122 1749 H106 Q104.5 1749 105.5 1747.5 L109.5 1743 L108.5 1738 Q106 1738 106 1736 V1735 Q106 1733 107 1733 Z"/><path d="M114 1749 V1757"/><path d="M109.5 1786 L117 1792.5 L109.5 1799"/></g>
 <use href="#chd" x="185" y="1631" width="18" height="11"/>
 <path d="M226 1636.5 L233 1643.5 L246 1629" fill="none" stroke="#5FB865" stroke-width="3.4" stroke-linecap="round" stroke-linejoin="round"/>
 <g class="s" stroke="#CED0D6" stroke-width="2.4"><path d="M274 1670 V1689"/><path d="M266 1682 L274 1690 L282 1682"/><path d="M263 1687 V1696.5 H285 V1687"/></g>
 <!-- table separators -->
 <g fill="#393B40"><rect x="1318" y="1681" width="2" height="43"/><rect x="1548" y="1681" width="2" height="43"/><rect x="1778" y="1681" width="2" height="43"/><rect x="2008" y="1681" width="2" height="43"/><rect x="2254" y="1681" width="2" height="43"/><rect x="2562" y="1681" width="2" height="43"/>
 <rect x="1294" y="1752" width="2" height="43"/><rect x="2456" y="1752" width="2" height="43"/><rect x="2616" y="1752" width="2" height="43"/><rect x="2766" y="1752" width="2" height="43"/></g>
 <g fill="#1E1F22"><rect x="1075" y="1726" width="1861" height="2"/><rect x="1075" y="1748" width="1861" height="2"/><rect x="1075" y="1798" width="1861" height="2"/></g>
 <path d="M1590 1647.5 L1601 1636.5 M1593 1636 H1601.5 V1644.5" fill="none" stroke="#CED0D6" stroke-width="2" stroke-linecap="round"/>
</svg>
<div class="t" style="left:258px;top:1614px;font-size:25.4px;font-weight:bold">CobaAplikasi1:</div>
<div class="t" style="left:449px;top:1614px;font-size:27.9px">finished</div>
<div class="t" style="left:555px;top:1614px;font-size:27.4px;color:#868A91">At 14/12/25, 22.50</div>
<div class="t" style="left:790px;top:1614px;font-size:25.3px;color:#868A91">40 min, 26 sec, 84 ms</div>
<div class="t" style="left:297px;top:1662px;font-size:27.5px">Download info</div>
<div class="t" style="left:1096px;top:1619px;font-size:27.7px;color:#709DF8">Read more on repositories optimization</div>
<div class="a" style="left:1075px;top:1728px;width:1861px;height:20px;overflow:hidden">
 <div class="t" style="left:11px;top:0px">Total</div>
 <div class="t" style="left:256px;top:0px">253</div>
 <div class="t" style="left:485px;top:0px">251.93 MB</div>
 <div class="t" style="left:715px;top:0px">3 m 25 s 523 ms</div>
 <div class="t" style="left:945px;top:0px">283.04 kB/s</div>
 <div class="t" style="left:1191px;top:0px">43</div>
 <div class="t" style="left:1501px;top:0px">3 s 448 ms</div>
</div>
<div class="t" style="left:1090px;top:1681px;font-size:27.2px">Repository</div>
<div class="t" style="left:1334px;top:1681px;font-size:27.2px">Requests</div>
<div class="t" style="left:1564px;top:1681px;font-size:27.2px">Data</div>
<div class="t" style="left:1794px;top:1681px;font-size:27.2px">Time</div>
<div class="t" style="left:2024px;top:1681px;font-size:27.2px">Avg Speed</div>
<div class="t" style="left:2270px;top:1681px;font-size:27.2px">Failed Requests</div>
<div class="t" style="left:2578px;top:1681px;font-size:27.2px">Failed Requests Time</div>
<div class="t" style="left:1090px;top:1753px;font-size:27.2px">Status</div>
<div class="t" style="left:1310px;top:1753px;font-size:27.2px">File</div>
<div class="t" style="left:2472px;top:1753px;font-size:27.2px">Time</div>
<div class="t" style="left:2632px;top:1753px;font-size:27.2px">Size</div>
<div class="t" style="left:2782px;top:1753px;font-size:27.2px">Avg Speed</div>

<!-- ============ STATUS BAR ============ -->
<div class="a" style="left:0;top:1820px;width:3016px;height:2px;background:#1E1F22"></div>
<svg class="i" style="left:0;top:0" width="3016" height="1880">
 <g fill="none" stroke="#548AF7" stroke-width="2.3"><rect x="24" y="1843.5" width="12.5" height="12.5" rx="2.5"/><rect x="267.5" y="1843.5" width="12.5" height="12.5" rx="2.5"/><rect x="473.5" y="1843.5" width="12.5" height="12.5" rx="2.5"/></g>
 <g class="s" stroke="#9A9DA3" stroke-width="2.2"><path d="M237 1843 L243.5 1849.5 L237 1856"/><path d="M357.5 1843 L364 1849.5 L357.5 1856"/><path d="M443.5 1843 L450 1849.5 L443.5 1856"/><path d="M575 1843 L581.5 1849.5 L575 1856"/><path d="M673.5 1843 L680 1849.5 L673.5 1856"/><path d="M775.5 1843 L782 1849.5 L775.5 1856"/><path d="M927 1843 L933.5 1849.5 L927 1856"/><path d="M1140 1843 L1146.5 1849.5 L1140 1856"/><path d="M1414 1843 L1420.5 1849.5 L1414 1856"/><path d="M1653 1843 L1659.5 1849.5 L1653 1856"/></g>
 <use href="#kt" x="1174" y="1837" width="24" height="24"/>
 <g fill="none" stroke="#548AF7" stroke-width="2.3"><path d="M1468 1842 Q1463 1837 1457 1837 Q1445 1837 1445 1849.5 Q1445 1862 1457 1862 H1460"/><circle cx="1457.5" cy="1849.5" r="5.5"/></g>
 <path d="M1461.5 1849 H1473.5 L1467.5 1855 L1473.5 1861.5 H1461.5 Z" fill="#2A2433" stroke="#A77CF0" stroke-width="2" stroke-linejoin="round"/>
 <circle cx="1697.7" cy="1849.5" r="12.5" fill="#4A2B2B" stroke="#DB5C5C" stroke-width="2.3"/>
 <path d="M1690.5 1855 V1846 M1690.5 1847.5 Q1690.5 1844.5 1694 1844.5 Q1697.5 1844.5 1697.5 1847.5 V1855 M1697.5 1847.5 Q1697.5 1844.5 1701 1844.5 Q1704.5 1844.5 1704.5 1847.5 V1855" fill="none" stroke="#DB5C5C" stroke-width="2" stroke-linecap="round"/>
 <!-- right status icons -->
 <g class="s" stroke="#C4C6CC" stroke-width="4.2"><path d="M2643.5 1842 H2653"/><path d="M2643.5 1850.2 H2660"/><path d="M2643.5 1858.3 H2653"/></g>
 <g class="s" stroke="#C4C6CC" stroke-width="2.4"><circle cx="2663" cy="1841" r="5.8"/><path d="M2659.2 1844.8 L2666.8 1837.2"/></g>
 <g class="s" stroke="#C4C6CC" stroke-width="2.3"><path d="M2716 1863.5 H2711 Q2708.5 1863.5 2708.5 1861 V1845 L2715.5 1837.5 H2725 Q2727.5 1837.5 2727.5 1840 V1849"/><path d="M2708.5 1845 H2713 Q2715.5 1845 2715.5 1842.5 V1837.5"/></g>
 <path d="M2724.4 1848.5 H2727.6 L2728.4 1850.9 L2730.7 1849.9 L2733 1852.2 L2732 1854.5 L2734.4 1855.4 V1858.6 L2732 1859.5 L2733 1861.8 L2730.7 1864.1 L2728.4 1863.1 L2727.6 1865.5 H2724.4 L2723.6 1863.1 L2721.3 1864.1 L2719 1861.8 L2720 1859.5 L2717.6 1858.6 V1855.4 L2720 1854.5 L2719 1852.2 L2721.3 1849.9 L2723.6 1850.9 Z" fill="#3A3C41" stroke="#C4C6CC" stroke-width="2" stroke-linejoin="round"/>
 <circle cx="2726" cy="1857" r="1.8" fill="#C4C6CC"/>
 <g class="s" stroke="#C4C6CC" stroke-width="2.4"><rect x="2893.5" y="1847" width="17.5" height="13.5" rx="2.5"/><path d="M2905 1847 V1843 Q2905 1837.5 2910.5 1837.5 Q2916 1837.5 2916 1843 V1846.5"/></g>
 <path d="M2902.2 1851 V1855.5" stroke="#C4C6CC" stroke-width="2.4" stroke-linecap="round"/>
 <circle cx="2966" cy="1850" r="12.9" fill="none" stroke="#C4C6CC" stroke-width="2.5"/>
 <path d="M2966 1843 V1850.5" stroke="#C4C6CC" stroke-width="4" stroke-linecap="round"/>
 <circle cx="2966" cy="1856.3" r="2.3" fill="#C4C6CC"/>
</svg>
<div class="t" style="left:46px;top:1826px;color:#A0A3A9;font-size:27.2px">CobaAplikasi1</div>
<div class="t" style="left:290px;top:1826px;color:#A0A3A9;font-size:27.2px">app</div>
<div class="t" style="left:386px;top:1826px;color:#A0A3A9;font-size:27.2px">src</div>
<div class="t" style="left:496px;top:1826px;color:#A0A3A9;font-size:27.2px">main</div>
<div class="t" style="left:602px;top:1826px;color:#A0A3A9;font-size:27.2px">java</div>
<div class="t" style="left:702px;top:1826px;color:#A0A3A9;font-size:27.2px">com</div>
<div class="t" style="left:804px;top:1826px;color:#A0A3A9;font-size:27.2px">example</div>
<div class="t" style="left:956px;top:1826px;color:#A0A3A9;font-size:27.2px">cobaaplikasi1</div>
<div class="t" style="left:1210px;top:1826px;color:#A0A3A9;font-size:28px">MainActivity.kt</div>
<div class="t" style="left:1482px;top:1826px;color:#A0A3A9;font-size:28px">MainActivity</div>
<div class="t" style="left:1722px;top:1826px;color:#A0A3A9;font-size:27.2px">onCreate</div>
<div class="t" style="left:2366px;top:1826px;color:#A0A3A9;font-size:27.2px">20:21</div>
<div class="t" style="left:2464px;top:1826px;color:#A0A3A9;font-size:27.2px">LF</div>
<div class="t" style="left:2526px;top:1826px;color:#A0A3A9;font-size:27.2px">UTF-8</div>
<div class="t" style="left:2743px;top:1826px;color:#A0A3A9;font-size:27.2px">4 spaces</div>

</body></html>
